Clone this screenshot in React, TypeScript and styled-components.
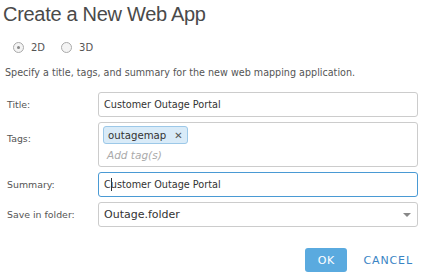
import React from "react";
import styled, { createGlobalStyle } from "styled-components";

const GlobalStyle = createGlobalStyle`
  body {
    margin: 0;
    background: #fff;
    font-family: "DejaVu Sans", Verdana, sans-serif;
  }
`;

const Dialog = styled.div`
  width: 423px;
  height: 278px;
  box-sizing: border-box;
  padding: 2px 5px 0 5px;
  background: #fff;
  overflow: hidden;
`;

const Heading = styled.h1`
  margin: 0 0 0 -2px;
  font-family: "Liberation Sans", Arial, sans-serif;
  font-weight: 400;
  font-size: 20px;
  letter-spacing: -0.3px;
  line-height: 24px;
  color: #4a4a4a;
`;

const RadioRow = styled.div`
  display: flex;
  align-items: center;
  gap: 16px;
  margin: 12px 0 0 8px;
  height: 18px;
`;

const RadioOption = styled.label`
  display: flex;
  align-items: center;
  gap: 7px;
  font-size: 10px;
  color: #555;
`;

const RadioCircle = styled.span<{ $checked?: boolean }>`
  width: 9px;
  height: 9px;
  border-radius: 50%;
  border: 1px solid #aaa;
  background: #f4f4f4;
  display: flex;
  align-items: center;
  justify-content: center;
  &::after {
    content: "";
    width: 3px;
    height: 3px;
    border-radius: 50%;
    background: ${(p) => (p.$checked ? "#888" : "transparent")};
  }
`;

const Intro = styled.p`
  margin: 11px 0 0 0;
  font-size: 9.6px;
  color: #555;
`;

const Form = styled.div`
  display: grid;
  grid-template-columns: 93px 1fr;
  row-gap: 5px;
  margin-top: 14px;
`;

const Label = styled.div<{ $top?: boolean }>`
  font-size: 9.4px;
  color: #555;
  padding-left: 2px;
  display: flex;
  align-items: ${(p) => (p.$top ? "flex-start" : "center")};
  padding-top: ${(p) => (p.$top ? "11px" : "0")};
`;

const Field = styled.div<{ $focused?: boolean }>`
  height: 25px;
  box-sizing: border-box;
  border: 1px solid ${(p) => (p.$focused ? "#4a9ad4" : "#ccc")};
  border-radius: 3px;
  padding: 0 5px;
  display: flex;
  align-items: center;
  font-size: 9.7px;
  color: #333;
`;

const Caret = styled.span`
  display: inline-block;
  width: 1px;
  height: 13px;
  background: #333;
  margin: 0 -1px 0 0;
`;

const TagsBox = styled.div`
  height: 45px;
  box-sizing: border-box;
  border: 1px solid #ccc;
  border-radius: 3px;
  padding: 3px 4px;
  display: flex;
  flex-direction: column;
  align-items: flex-start;
  gap: 5px;
`;

const Tag = styled.span`
  display: inline-flex;
  align-items: center;
  gap: 8px;
  height: 18px;
  box-sizing: border-box;
  padding: 0 4px 0 4px;
  background: #d9ebf8;
  border: 1px solid #9cc8e8;
  border-radius: 3px;
  font-size: 10.2px;
  color: #333;
`;

const TagRemove = styled.span`
  font-size: 10px;
  color: #555;
  font-weight: 700;
`;

const TagInput = styled.span`
  font-size: 10.5px;
  font-style: italic;
  color: #aaa;
  padding-left: 4px;
`;

const Select = styled(Field)`
  justify-content: space-between;
  font-size: 11px;
  padding-right: 6px;
`;

const Arrow = styled.span`
  width: 0;
  height: 0;
  border-left: 4px solid transparent;
  border-right: 4px solid transparent;
  border-top: 4px solid #888;
`;

const Footer = styled.div`
  display: flex;
  justify-content: flex-end;
  align-items: center;
  gap: 16px;
  margin-top: 21px;
  padding-right: 5px;
`;

const Button = styled.button<{ $primary?: boolean }>`
  height: 24px;
  padding: 0;
  border: none;
  border-radius: 3px;
  font-family: "DejaVu Sans", Verdana, sans-serif;
  font-size: 11px;
  letter-spacing: ${(p) => (p.$primary ? "0.6px" : "0.9px")};
  background: ${(p) => (p.$primary ? "#5aaadf" : "transparent")};
  color: ${(p) => (p.$primary ? "#fff" : "#3a84c4")};
  width: ${(p) => (p.$primary ? "42px" : "auto")};
  cursor: pointer;
`;

export default function App() {
  return (
    <>
      <GlobalStyle />
      <Dialog>
        <Heading>Create a New Web App</Heading>
        <RadioRow>
          <RadioOption>
            <RadioCircle $checked />
            2D
          </RadioOption>
          <RadioOption>
            <RadioCircle />
            3D
          </RadioOption>
        </RadioRow>
        <Intro>Specify a title, tags, and summary for the new web mapping application.</Intro>
        <Form>
          <Label>Title:</Label>
          <Field>Customer Outage Portal</Field>

          <Label $top>Tags:</Label>
          <TagsBox>
            <Tag>
              outagemap
              <TagRemove>✕</TagRemove>
            </Tag>
            <TagInput>Add tag(s)</TagInput>
          </TagsBox>

          <Label>Summary:</Label>
          <Field $focused>
            C
            <Caret />
            ustomer Outage Portal
          </Field>

          <Label>Save in folder:</Label>
          <Select>
            Outage.folder
            <Arrow />
          </Select>
        </Form>
        <Footer>
          <Button $primary>OK</Button>
          <Button>CANCEL</Button>
        </Footer>
      </Dialog>
    </>
  );
}
